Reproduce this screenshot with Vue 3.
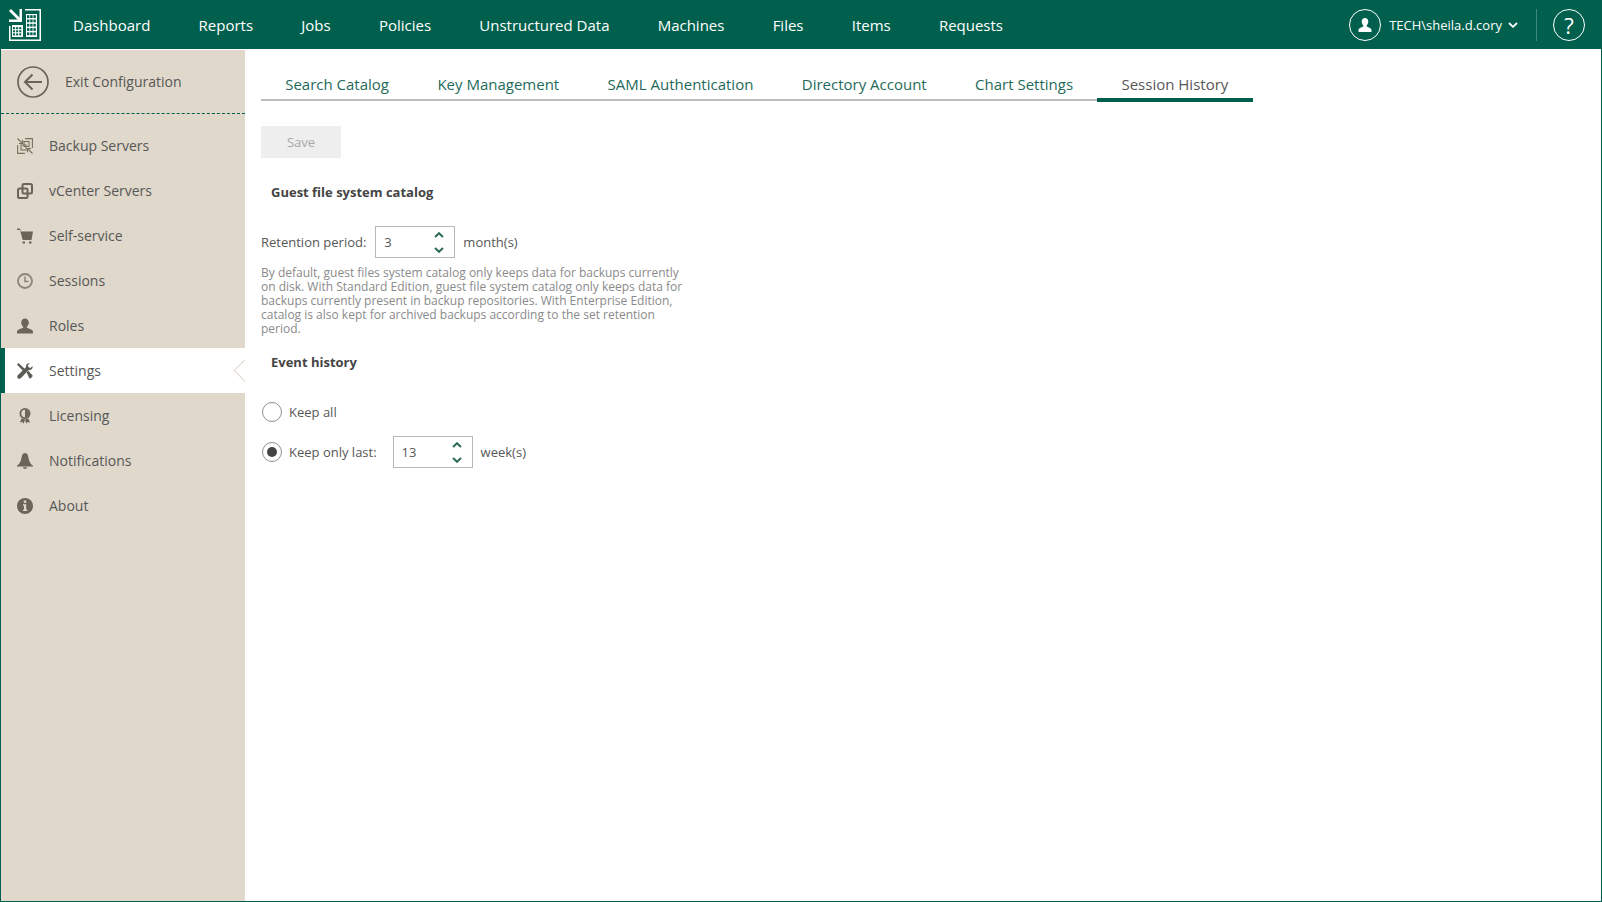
<template>
  <div class="app">
    <header class="topbar">
      <svg class="logo" viewBox="0 0 32 32" fill="#fff">
        <path d="M10.500 0H13V13H0V10.500H10.500Z" />
        <path d="M0 2L2 0L12.500 10.500L10.500 12.500Z" />
        <path d="M16 0H32V32H0V17H1.500V30.500H30.500V1.500H16Z" />
        <path d="M17 5H28V28H17Z" />
        <path d="M3 16H14V28H3Z" />
        <g fill="#00604d">
          <rect v-for="c in bigGrid" :key="c.k" :x="c.x" :y="c.y" width="2.400" height="2.800" />
          <rect v-for="c in smallGrid" :key="c.k" :x="c.x" :y="c.y" width="2.100" height="2" />
        </g>
      </svg>
      <nav class="mainnav">
        <a v-for="item in navItems" :key="item">{{ item }}</a>
      </nav>
      <div class="userbox">
        <span class="round">
          <svg viewBox="0 0 16 16" width="16" height="16" fill="#fff">
            <path d="M8 1C10 1 11.300 2.500 11.300 4.600C11.300 6.400 10.400 7.800 9.700 8.400V9.600C11 10.400 14.500 11.200 14.500 13V15H1.500V13C1.500 11.200 5 10.400 6.300 9.600V8.400C5.600 7.800 4.700 6.400 4.700 4.600C4.700 2.500 6 1 8 1Z" />
          </svg>
        </span>
        <span class="username">TECH\sheila.d.cory</span>
        <svg class="caret" viewBox="0 0 10 6" width="10" height="6">
          <path d="M1 1L5 4.800L9 1" fill="none" stroke="#fff" stroke-width="1.800" />
        </svg>
      </div>
      <span class="divider"></span>
      <span class="round help">?</span>
    </header>

    <div class="body">
      <aside class="sidebar">
        <div class="exit">
          <svg viewBox="0 0 32 32" width="32" height="32" fill="none" stroke="#6b6558" stroke-width="1.700">
            <circle cx="16" cy="16" r="15" />
            <path d="M25 16H8M15.500 8.500L8 16L15.500 23.500" stroke-width="2" />
          </svg>
          <span>Exit Configuration</span>
        </div>
        <ul class="menu">
          <li v-for="item in menuItems" :key="item.label" :class="{ active: item.active }">
            <svg viewBox="0 0 16 16" width="16" height="16" v-html="item.icon"></svg>
            <span>{{ item.label }}</span>
          </li>
        </ul>
      </aside>

      <main class="content">
        <div class="tabs">
          <a v-for="tab in tabs" :key="tab" :class="{ on: tab === 'Session History' }">{{ tab }}</a>
        </div>
        <button class="save" disabled>Save</button>
        <h3 class="first">Guest file system catalog</h3>
        <div class="row retention">
          <label>Retention period:</label>
          <div class="spin">
            <span>3</span>
            <div class="arrows">
              <svg viewBox="0 0 10 6" width="10" height="6"><path d="M1 5L5 1.200L9 5" /></svg>
              <svg viewBox="0 0 10 6" width="10" height="6"><path d="M1 1L5 4.800L9 1" /></svg>
            </div>
          </div>
          <span class="unit">month(s)</span>
        </div>
        <p class="note">By default, guest files system catalog only keeps data for backups currently on disk. With Standard Edition, guest file system catalog only keeps data for backups currently present in backup repositories. With Enterprise Edition, catalog is also kept for archived backups according to the set retention period.</p>
        <h3 class="second">Event history</h3>
        <div class="row keepall">
          <span class="radio"></span>
          <label>Keep all</label>
        </div>
        <div class="row keeplast">
          <span class="radio checked"></span>
          <label>Keep only last:</label>
          <div class="spin">
            <span>13</span>
            <div class="arrows">
              <svg viewBox="0 0 10 6" width="10" height="6"><path d="M1 5L5 1.200L9 5" /></svg>
              <svg viewBox="0 0 10 6" width="10" height="6"><path d="M1 1L5 4.800L9 1" /></svg>
            </div>
          </div>
          <span>week(s)</span>
        </div>
      </main>
    </div>
  </div>
</template>

<script setup>
const navItems = ['Dashboard', 'Reports', 'Jobs', 'Policies', 'Unstructured Data', 'Machines', 'Files', 'Items', 'Requests']
const tabs = ['Search Catalog', 'Key Management', 'SAML Authentication', 'Directory Account', 'Chart Settings', 'Session History']

const bigGrid = []
for (let r = 0; r < 5; r++) {
  for (let c = 0; c < 3; c++) {
    bigGrid.push({ k: `b${r}${c}`, x: 18 + c * 3.2, y: 6.2 + r * 4.3 })
  }
}
const smallGrid = []
for (let r = 0; r < 3; r++) {
  for (let c = 0; c < 3; c++) {
    smallGrid.push({ k: `s${r}${c}`, x: 4 + c * 3.1, y: 18.2 + r * 3.1 })
  }
}

const menuItems = [
  {
    label: 'Backup Servers',
    icon: '<g fill="none" stroke="#77715f" stroke-width="1.100"><path d="M8 0.600H15.400V10M0.600 7V15.400H8"/><path d="M0.500 0.500L5.500 5.500M5.500 1.800V5.500H1.800M15.500 15.500L10.500 10.500M10.500 14.200V10.500H14.200"/><rect x="7" y="3.500" width="5" height="5"/><rect x="4" y="7" width="5" height="5"/></g>'
  },
  {
    label: 'vCenter Servers',
    icon: '<g fill="none" stroke="#6b6558" stroke-width="2"><rect x="5.500" y="1" width="9.500" height="9.500" rx="1.500"/><rect x="1" y="5.500" width="9.500" height="9.500" rx="1.500"/></g>'
  },
  {
    label: 'Self-service',
    icon: '<path fill="#6b6558" d="M0 0.500H3L3.800 3.500H16L14.500 12H5.700L3 2H0Z"/><rect x="5.500" y="13.500" width="2.500" height="2" fill="#6b6558"/><rect x="12" y="13.500" width="2.500" height="2" fill="#6b6558"/>'
  },
  {
    label: 'Sessions',
    icon: '<circle cx="8" cy="8" r="7" fill="none" stroke="#8a8578" stroke-width="1.800"/><path d="M8 3.500V8.500H11.500" fill="none" stroke="#8a8578" stroke-width="1.500"/>'
  },
  {
    label: 'Roles',
    icon: '<path fill="#6b6558" d="M8 0.500C10.300 0.500 11.800 2.200 11.800 4.500C11.800 6.500 10.800 8 9.800 8.800V9.800C11.500 10.600 16 11.500 16 14V15.500H0V14C0 11.500 4.500 10.600 6.200 9.800V8.800C5.200 8 4.200 6.500 4.200 4.500C4.200 2.200 5.700 0.500 8 0.500Z"/>'
  },
  {
    label: 'Settings',
    active: true,
    icon: '<g fill="#5c5c55"><path d="M1.500 0L7.700 5.800L5.800 7.700L0 1.500Z"/><path d="M12.800 0.300L10.500 2.800L13 5.300L15.600 3C16 5.500 14.300 7.400 11.800 7.100L4 15C3 16 1.500 16 0.800 15.200C0 14.400 0 13 1 12L8.900 4.200C8.600 1.700 10.500 0 12.800 0.300Z"/><path d="M9.600 9.400L11.400 7.800L15.600 12.500C16 13.500 13.500 16 12.500 15.500Z"/></g>'
  },
  {
    label: 'Licensing',
    icon: '<circle cx="8" cy="5.500" r="4.600" fill="none" stroke="#6b6558" stroke-width="1.800"/><path d="M8 1.500V9.500C10 9.500 12 7.800 12 5.500C12 3.200 10 1.500 8 1.500Z" fill="#6b6558"/><path d="M4.500 10.500L3 14.500L5.500 14L6.500 15.800L8 12L9.500 15.800L10.500 14L13 14.500L11.500 10.500L8 11.500Z" fill="#6b6558"/>'
  },
  {
    label: 'Notifications',
    icon: '<path fill="#6b6558" d="M8 0C9.300 0 10.300 0.800 10.800 2C12 6 12 10.500 16 12.500V13.500H0V12.500C4 10.500 4 6 5.200 2C5.700 0.800 6.700 0 8 0Z"/><path fill="#6b6558" d="M6 14.300H10C10 15.300 9 16 8 16C7 16 6 15.300 6 14.300Z"/>'
  },
  {
    label: 'About',
    icon: '<circle cx="8" cy="8" r="8" fill="#6b6558"/><rect x="6.800" y="2.500" width="2.400" height="2.400" fill="#dfd8cb"/><path fill="#dfd8cb" d="M6 6.300H9.200V11.500H10.200V13H6V11.500H7V7.800H6Z"/>'
  }
]
</script>

<style>
html, body { margin: 0; background: #fff; }
</style>

<style scoped>
.app {
  width: 1602px;
  height: 902px;
  box-sizing: border-box;
  display: flex;
  flex-direction: column;
  border: 1px solid #00604d;
  border-top: 0;
  font-family: "Open Sans", sans-serif;
  font-size: 14px;
  color: #575757;
  overflow: hidden;
}

.topbar {
  height: 49px;
  margin: 0 -1px;
  flex: none;
  background: #00604d;
  display: flex;
  align-items: center;
  color: #fff;
}

.logo {
  width: 32px;
  height: 32px;
  margin-left: 9px;
}

.mainnav {
  display: flex;
  margin-left: 32px;
  gap: 48.200px;
  font-size: 15px;
}

.userbox {
  margin-left: auto;
  display: flex;
  align-items: center;
}

.round {
  width: 32px;
  height: 32px;
  box-sizing: border-box;
  border: 1.500px solid #fff;
  border-radius: 50%;
  display: flex;
  align-items: center;
  justify-content: center;
}

.username {
  margin-left: 8px;
  font-size: 13px;
}

.caret {
  margin-left: 6px;
}

.divider {
  width: 1px;
  height: 32px;
  margin: 0 16px 0 18px;
  background: rgba(255, 255, 255, 0.25);
}

.help {
  margin-right: 17px;
  font-size: 22px;
}

.body {
  flex: 1;
  display: flex;
  min-height: 0;
}

.sidebar {
  width: 244px;
  margin-top: 1px;
  flex: none;
  background: #dfd8cb;
  color: #575757;
}

.exit {
  height: 64px;
  box-sizing: border-box;
  padding-left: 16px;
  display: flex;
  align-items: center;
  gap: 16px;
  border-bottom: 1px dashed #00604d;
}

.menu {
  list-style: none;
  margin: 9px 0 0;
  padding: 0;
}

.menu li {
  height: 45px;
  padding-left: 16px;
  display: flex;
  align-items: center;
  gap: 16px;
  position: relative;
}

.menu li.active {
  background: #fff;
  margin-left: -1px;
  padding-left: 12px;
  border-left: 5px solid #00604d;
  overflow: hidden;
}

.menu li.active::after {
  content: "";
  position: absolute;
  right: -9px;
  top: 14px;
  width: 17px;
  height: 17px;
  box-sizing: border-box;
  border-left: 1px solid #dfd8cb;
  border-bottom: 1px solid #dfd8cb;
  transform: rotate(45deg);
}

.content {
  flex: 1;
  padding: 1px 0 0 16px;
}

.tabs {
  width: 991px;
  height: 51px;
  box-sizing: border-box;
  display: flex;
  align-items: flex-end;
  border-bottom: 2px solid #bdbdbd;
  font-size: 15px;
  color: #1f6a5a;
}

.tabs a {
  flex: none;
  white-space: nowrap;
  padding: 0 24.200px 4px;
  line-height: 22px;
}

.tabs a.on {
  color: #575757;
  border-bottom: 4px solid #00604d;
  margin-bottom: -3px;
  padding-bottom: 3px;
}

.save {
  display: block;
  width: 80px;
  height: 32px;
  margin-top: 25px;
  padding: 0;
  border: 0;
  background: #eeeeee;
  color: #a8a8a8;
  font: inherit;
  font-size: 13px;
}

h3 {
  margin: 0;
  padding-left: 10px;
  font-size: 13px;
  font-weight: 700;
  color: #444;
  line-height: 18px;
}

h3.first { margin-top: 25px; }
h3.second { margin-top: 17px; }

.row {
  display: flex;
  align-items: center;
  font-size: 13px;
}

.retention {
  margin-top: 25px;
  gap: 9px;
}

.retention .unit {
  margin-left: -1px;
}

.spin {
  width: 80px;
  height: 32px;
  box-sizing: border-box;
  border: 1px solid #b8b8b8;
  padding: 0 10px 0 8px;
  display: flex;
  align-items: center;
  justify-content: space-between;
}

.arrows {
  display: flex;
  flex-direction: column;
  gap: 9px;
}

.arrows svg {
  display: block;
  fill: none;
  stroke: #2d6a58;
  stroke-width: 2;
}

.note {
  width: 424px;
  margin: 8px 0 0;
  font-size: 12px;
  line-height: 14px;
  color: #8a8a8a;
}

.keepall {
  margin-top: 31px;
  height: 20px;
}

.keeplast {
  margin-top: 14px;
}

.radio {
  width: 20px;
  height: 20px;
  margin-left: 1px;
  margin-right: 7px;
  box-sizing: border-box;
  border: 1.500px solid #8f8f8f;
  border-radius: 50%;
  position: relative;
}

.radio.checked::after {
  content: "";
  position: absolute;
  left: 3.500px;
  top: 3.500px;
  width: 10px;
  height: 10px;
  border-radius: 50%;
  background: #444;
}

.keeplast .spin {
  margin: 0 8px 0 16px;
}
</style>
